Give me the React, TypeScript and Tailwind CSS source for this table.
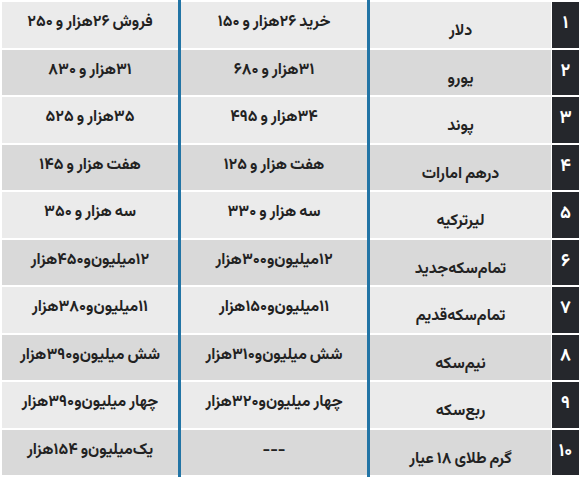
import React from "react";

const Z = "\u200c";
const rows = [
  { n: "۱", name: "دلار", buy: "خرید ۲۶هزار و ۱۵۰", sell: "فروش ۲۶هزار و ۲۵۰" },
  { n: "۲", name: "یورو", buy: "۳۱هزار و ۶۸۰", sell: "۳۱هزار و ۸۳۰" },
  { n: "۳", name: "پوند", buy: "۳۴هزار و ۴۹۵", sell: "۳۵هزار و ۵۲۵" },
  { n: "۴", name: "درهم امارات", buy: "هفت هزار و ۱۲۵", sell: "هفت هزار و ۱۴۵" },
  { n: "۵", name: "لیرترکیه", buy: "سه هزار و ۳۳۰", sell: "سه هزار و ۳۵۰" },
  { n: "۶", name: `تمام${Z}سکه${Z}جدید`, buy: `۱۲میلیون${Z}و${Z}۳۰۰هزار`, sell: `۱۲میلیون${Z}و${Z}۴۵۰هزار` },
  { n: "۷", name: `تمام${Z}سکه${Z}قدیم`, buy: `۱۱میلیون${Z}و${Z}۱۵۰هزار`, sell: `۱۱میلیون${Z}و${Z}۳۸۰هزار` },
  { n: "۸", name: `نیم${Z}سکه`, buy: `شش میلیون${Z}و${Z}۳۱۰هزار`, sell: `شش میلیون${Z}و${Z}۳۹۰هزار` },
  { n: "۹", name: `ربع${Z}سکه`, buy: `چهار میلیون${Z}و${Z}۳۲۰هزار`, sell: `چهار میلیون${Z}و${Z}۳۹۰هزار` },
  { n: "۱۰", name: "گرم طلای ۱۸ عیار", buy: "---", sell: `یک${Z}میلیون${Z}و ۱۵۴هزار` },
];

const bg = (i: number) => (i % 2 === 0 ? "bg-[#ebebeb]" : "bg-[#d9d9d9]");

function ValueCol({ width, items }: { width: string; items: string[] }) {
  return (
    <div className={`${width} flex flex-col gap-[2px] pt-[2px]`}>
      {items.map((t, i) => (
        <div
          key={i}
          dir="rtl"
          className={`h-[45.5px] ${bg(i)} flex justify-center pt-[10px] text-[16px] leading-[22px] font-bold text-[#222] whitespace-nowrap [word-spacing:-1px]`}
        >
          {t}
        </div>
      ))}
    </div>
  );
}

export default function App() {
  return (
    <div
      className="w-[582px] h-[483px] bg-white flex flex-row pl-[2px] pr-[3px]"
      style={{ fontFamily: 'Vazirmatn, "Noto Sans Arabic", "DejaVu Sans", sans-serif' }}
    >
      <ValueCol width="w-[176px]" items={rows.map((r) => r.sell)} />
      <div className="w-[3px] h-[477px] bg-[#2274a5]" />
      <ValueCol width="w-[186px]" items={rows.map((r) => r.buy)} />
      <div className="w-[3px] h-[477px] bg-[#2274a5]" />
      <div className="w-[181px] flex flex-col gap-[2px] pt-[2px]">
        {rows.map((r, i) => (
          <div
            key={i}
            dir="rtl"
            className={`h-[45.5px] ${bg(i)} flex justify-center pt-[19px] text-[16px] leading-[22px] font-bold text-[#222] whitespace-nowrap [word-spacing:-1px]`}
          >
            {r.name}
          </div>
        ))}
      </div>
      <div className="w-[1px]" />
      <div className="w-[27px] flex flex-col gap-[2px] pt-[2px]">
        {rows.map((r, i) => (
          <div
            key={i}
            className="h-[45.5px] bg-[#25272c] flex justify-center pt-[11px] text-[18px] leading-[22px] font-bold text-white"
          >
            {r.n}
          </div>
        ))}
      </div>
    </div>
  );
}
